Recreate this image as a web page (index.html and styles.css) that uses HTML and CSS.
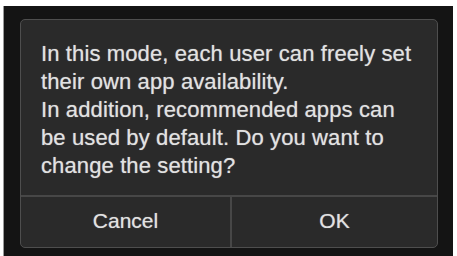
FILE: index.html
```html
<!DOCTYPE html>
<html lang="en">
<head>
<meta charset="utf-8">
<link rel="stylesheet" href="styles.css">
</head>
<body>
<div class="frame">
  <div class="dialog">
    <p class="message">In this mode, each user can freely set<br>their own app availability.<br>In addition, recommended apps can<br>be used by default. Do you want to<br>change the setting?</p>
    <div class="buttons">
      <div class="btn">Cancel</div>
      <div class="btn">OK</div>
    </div>
  </div>
</div>
</body>
</html>
```
FILE: styles.css
```css
html, body {
  margin: 0;
  padding: 0;
  background: #ffffff;
  width: 457px;
  height: 256px;
  overflow: hidden;
}
body {
  padding: 6px 4px 0 3px;
  box-sizing: border-box;
}
.frame {
  height: 250px;
  background: #141414;
  border-left: 1px solid #9a9a9a;
  padding: 13px 14px 0 16px;
  box-sizing: border-box;
}
.dialog {
  width: 418px;
  height: 229px;
  box-sizing: border-box;
  background: #2a2a2a;
  border: 1px solid #4e4e4e;
  border-radius: 5px;
  display: flex;
  flex-direction: column;
  font-family: "Liberation Sans", Arial, sans-serif;
  color: #e2e2e2;
  text-shadow: 0 0 1px rgba(226, 226, 226, 0.6);
}
.message {
  margin: 0;
  padding: 20px 0 0 20px;
  font-size: 22px;
  line-height: 28px;
  height: 175px;
  box-sizing: border-box;
  white-space: nowrap;
  letter-spacing: 0.12px;
}
.buttons {
  flex: 1;
  display: grid;
  grid-template-columns: 209px 1fr;
  border-top: 2px solid #474747;
}
.btn {
  display: flex;
  align-items: center;
  justify-content: center;
  font-size: 21px;
  padding-bottom: 2px;
}
.btn + .btn {
  border-left: 2px solid #474747;
}
```
